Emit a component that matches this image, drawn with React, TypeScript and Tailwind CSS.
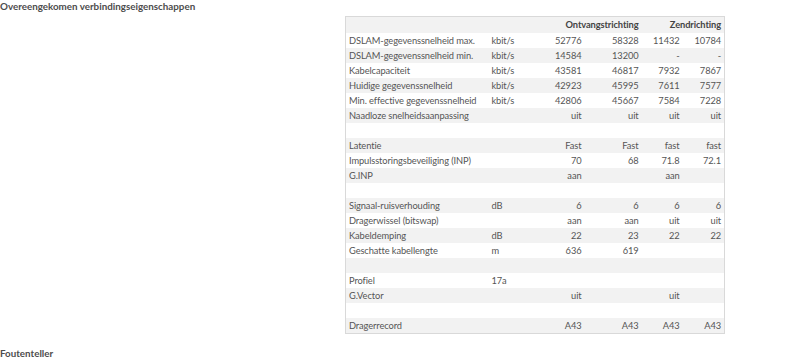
import React from 'react';

type Row = { label: string; unit?: string; v: (string | undefined)[] } | null;

const rows: Row[] = [
  { label: 'DSLAM-gegevenssnelheid max.', unit: 'kbit/s', v: ['52776', '58328', '11432', '10784'] },
  { label: 'DSLAM-gegevenssnelheid min.', unit: 'kbit/s', v: ['14584', '13200', '-', '-'] },
  { label: 'Kabelcapaciteit', unit: 'kbit/s', v: ['43581', '46817', '7932', '7867'] },
  { label: 'Huidige gegevenssnelheid', unit: 'kbit/s', v: ['42923', '45995', '7611', '7577'] },
  { label: 'Min. effective gegevenssnelheid', unit: 'kbit/s', v: ['42806', '45667', '7584', '7228'] },
  { label: 'Naadloze snelheidsaanpassing', v: ['uit', 'uit', 'uit', 'uit'] },
  null,
  { label: 'Latentie', v: ['Fast', 'Fast', 'fast', 'fast'] },
  { label: 'Impulsstoringsbeveiliging (INP)', v: ['70', '68', '71.8', '72.1'] },
  { label: 'G.INP', v: ['aan', undefined, 'aan', undefined] },
  null,
  { label: 'Signaal-ruisverhouding', unit: 'dB', v: ['6', '6', '6', '6'] },
  { label: 'Dragerwissel (bitswap)', v: ['aan', 'aan', 'uit', 'uit'] },
  { label: 'Kabeldemping', unit: 'dB', v: ['22', '23', '22', '22'] },
  { label: 'Geschatte kabellengte', unit: 'm', v: ['636', '619', undefined, undefined] },
  null,
  { label: 'Profiel', unit: '17a', v: [] },
  { label: 'G.Vector', v: ['uit', undefined, 'uit', undefined] },
  null,
  { label: 'Dragerrecord', v: ['A43', 'A43', 'A43', 'A43'] },
];

export default function App() {
  return (
    <div className="w-[800px] h-[359px] overflow-hidden bg-white text-[#555] font-['Lato',sans-serif] text-[9.3px] tracking-[-0.1px]">
      <h2 className="h-[16px] leading-[12px] text-[9.8px] tracking-normal font-bold text-[#4d4d4d]">
        Overeengekomen verbindingseigenschappen
      </h2>
      <table className="ml-[345px] w-[379px] table-fixed border-collapse border border-[#d9d9d9] leading-[14px]">
        <colgroup>
          <col className="w-[143px]" />
          <col className="w-[52px]" />
          <col className="w-[44px]" />
          <col className="w-[57px]" />
          <col className="w-[41px]" />
          <col className="w-[42px]" />
        </colgroup>
        <thead>
          <tr className="h-[16px] bg-[#f2f2f2] text-[#444]">
            <th className="p-0 px-[3px]" />
            <th className="p-0 px-[3px]" />
            <th colSpan={2} className="p-0 px-[3px] pt-[1px] text-right font-bold">Ontvangstrichting</th>
            <th colSpan={2} className="p-0 px-[3px] pt-[1px] text-right font-bold">Zendrichting</th>
          </tr>
        </thead>
        <tbody>
          {rows.map((r, i) => (
            <tr key={i} className={`h-[15px] ${i % 2 === 1 ? 'bg-[#f2f2f2]' : 'bg-white'}`}>
              <td className="p-0 px-[3px] pt-[1px] whitespace-nowrap overflow-hidden">{r?.label}</td>
              <td className="p-0 px-[3px] pt-[1px] whitespace-nowrap">{r?.unit}</td>
              {[0, 1, 2, 3].map((c) => (
                <td key={c} className="p-0 px-[3px] pt-[1px] text-right whitespace-nowrap">{r?.v[c]}</td>
              ))}
            </tr>
          ))}
        </tbody>
      </table>
      <h2 className="mt-[13px] leading-[12px] text-[9.8px] tracking-normal font-bold text-[#4d4d4d]">Foutenteller</h2>
    </div>
  );
}
